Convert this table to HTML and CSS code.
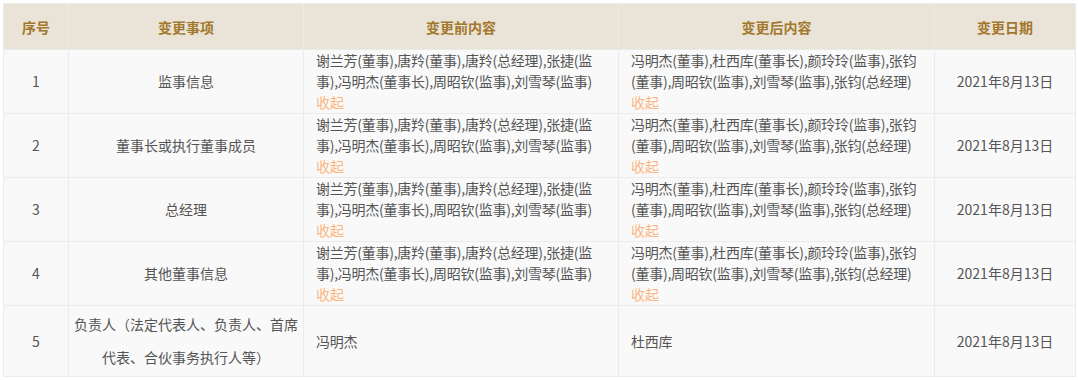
FILE: index.html
```html
<!DOCTYPE html>
<html lang="zh-CN">
<head>
<meta charset="utf-8">
<link rel="stylesheet" href="styles.css">
</head>
<body>
<table class="tbl">
  <colgroup>
    <col class="c1"><col class="c2"><col class="c3"><col class="c4"><col class="c5">
  </colgroup>
  <thead>
    <tr><th>序号</th><th>变更事项</th><th>变更前内容</th><th>变更后内容</th><th>变更日期</th></tr>
  </thead>
  <tbody>
    <tr>
      <td class="ctr">1</td>
      <td class="ctr">监事信息</td>
      <td class="txt">谢兰芳(董事),唐羚(董事),唐羚(总经理),张捷(监事),冯明杰(董事长),周昭钦(监事),刘雪琴(监事)<div class="fold">收起</div></td>
      <td class="txt">冯明杰(董事),杜西库(董事长),颜玲玲(监事),张钧(董事),周昭钦(监事),刘雪琴(监事),张钧(总经理)<div class="fold">收起</div></td>
      <td class="ctr">2021年8月13日</td>
    </tr>
    <tr>
      <td class="ctr">2</td>
      <td class="ctr">董事长或执行董事成员</td>
      <td class="txt">谢兰芳(董事),唐羚(董事),唐羚(总经理),张捷(监事),冯明杰(董事长),周昭钦(监事),刘雪琴(监事)<div class="fold">收起</div></td>
      <td class="txt">冯明杰(董事),杜西库(董事长),颜玲玲(监事),张钧(董事),周昭钦(监事),刘雪琴(监事),张钧(总经理)<div class="fold">收起</div></td>
      <td class="ctr">2021年8月13日</td>
    </tr>
    <tr>
      <td class="ctr">3</td>
      <td class="ctr">总经理</td>
      <td class="txt">谢兰芳(董事),唐羚(董事),唐羚(总经理),张捷(监事),冯明杰(董事长),周昭钦(监事),刘雪琴(监事)<div class="fold">收起</div></td>
      <td class="txt">冯明杰(董事),杜西库(董事长),颜玲玲(监事),张钧(董事),周昭钦(监事),刘雪琴(监事),张钧(总经理)<div class="fold">收起</div></td>
      <td class="ctr">2021年8月13日</td>
    </tr>
    <tr>
      <td class="ctr">4</td>
      <td class="ctr">其他董事信息</td>
      <td class="txt">谢兰芳(董事),唐羚(董事),唐羚(总经理),张捷(监事),冯明杰(董事长),周昭钦(监事),刘雪琴(监事)<div class="fold">收起</div></td>
      <td class="txt">冯明杰(董事),杜西库(董事长),颜玲玲(监事),张钧(董事),周昭钦(监事),刘雪琴(监事),张钧(总经理)<div class="fold">收起</div></td>
      <td class="ctr">2021年8月13日</td>
    </tr>
    <tr class="tall">
      <td class="ctr">5</td>
      <td class="ctr wide">负责人（法定代表人、负责人、首席代表、合伙事务执行人等）</td>
      <td class="txt">冯明杰</td>
      <td class="txt">杜西库</td>
      <td class="ctr">2021年8月13日</td>
    </tr>
  </tbody>
</table>
</body>
</html>
```

FILE: styles.css
```css
html, body {
  margin: 0;
  padding: 0;
  background: #ffffff;
}
body {
  padding: 3px 3px 0 3px;
  font-family: "Microsoft YaHei", "Noto Sans CJK SC", "Noto Sans", sans-serif;
  font-size: 14px;
  color: #555555;
}
.tbl {
  width: 1072px;
  border-collapse: collapse;
  table-layout: fixed;
  border: 1px solid #ebebeb;
  background: #f9f9f9;
}
.c1 { width: 65px; }
.c2 { width: 235px; }
.c3 { width: 315px; }
.c4 { width: 316px; }
.c5 { width: 141px; }
.tbl th {
  height: 45px;
  padding: 0;
  background: #eae3d7;
  color: #a2782c;
  font-weight: bold;
  text-align: center;
  border: 1px solid #ebebeb;
  border-top: 0;
}
.tbl td {
  border: 1px solid #ebebeb;
  line-height: 21px;
  padding: 0 12px;
  vertical-align: middle;
  height: 63px;
}
.tbl td.ctr {
  text-align: center;
  padding: 0 6px;
}
.tbl td.txt {
  text-align: left;
  letter-spacing: -0.25px;
}
.fold {
  color: #fbb67e;
  letter-spacing: 0;
}
.tall td {
  height: 70px;
}
.tbl td.wide {
  line-height: 33px;
  padding: 0 4px;
}
```
